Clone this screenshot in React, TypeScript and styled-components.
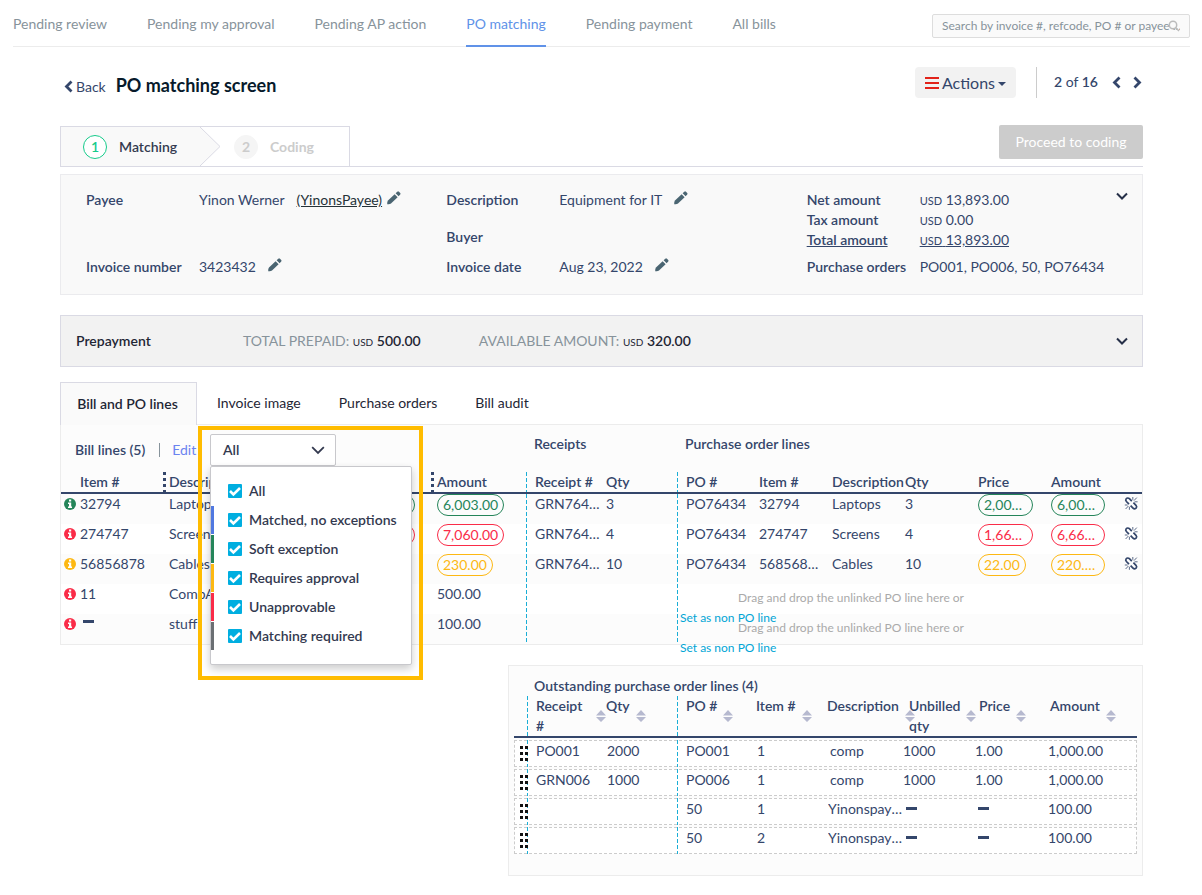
import React from "react";
import styled, { createGlobalStyle, css } from "styled-components";

const ink = "#34466b";

const GlobalStyle = createGlobalStyle`
  * { box-sizing: border-box; }
  body {
    margin: 0;
    background: #fff;
    color: ${ink};
    font: 400 14px/20px Lato, sans-serif;
  }
  button, input { font: inherit; color: inherit; }
  button { cursor: pointer; }
  a { color: inherit; text-decoration: none; }
`;

const TopBar = styled.header`
  display: flex;
  justify-content: space-between;
  height: 47px;
  margin: 0 12px 0 13px;
  border-bottom: 1px solid #ececec;
`;
const Nav = styled.nav`
  display: flex;
  gap: 40px;
`;
const NavLink = styled.a<{ $active?: boolean }>`
  height: 47px;
  padding-top: 14px;
  color: #87939b;
  white-space: nowrap;
  ${(p) => p.$active && css`color: #6092e8; border-bottom: 2px solid #6092e8;`}
`;
const Search = styled.label`
  display: flex;
  align-items: center;
  width: 258px;
  height: 24px;
  margin-top: 14px;
  padding: 0 9px;
  border: 1px solid #ddd;
  border-radius: 2px;
  background: #fafafa;
  color: #bbb;
  svg { flex: none; margin-left: -12px; }
`;
const SearchInput = styled.input`
  flex: 1;
  min-width: 0;
  padding: 0;
  border: 0;
  outline: 0;
  background: none;
  font-size: 12px;
  &::placeholder { color: #87939b; opacity: 1; }
`;

const Page = styled.main`
  margin: 0 59px 0 60px;
`;
const TitleRow = styled.div`
  display: flex;
  align-items: center;
  height: 31px;
  margin-top: 20px;
`;
const Back = styled.a`
  display: flex;
  align-items: center;
  gap: 3px;
  margin: 8px 10px 0 4px;
`;
const Title = styled.h1`
  flex: 1;
  margin: 5px 0 0;
  font-size: 18px;
  line-height: 24px;
  font-weight: 700;
  color: #071a2b;
`;
const ActionsButton = styled.button`
  display: flex;
  align-items: center;
  gap: 3px;
  height: 31px;
  padding: 0 10px;
  border: 0;
  border-radius: 4px;
  background: #f2f2f2;
  font-size: 16px;
`;
const Pager = styled.div`
  display: flex;
  align-items: center;
  height: 31px;
  margin-left: 20px;
  padding: 0 1px 0 17px;
  border-left: 1px solid #ccc;
`;
const PagerText = styled.span`
  margin-right: 14px;
  padding-bottom: 2px;
  b { font-weight: 600; }
`;
const IconButton = styled.button`
  display: flex;
  padding: 0;
  border: 0;
  background: none;
`;
const NextButton = styled(IconButton)`
  margin-left: 12px;
`;

const StepRow = styled.div`
  display: flex;
  justify-content: space-between;
  margin-top: 27px;
  border-bottom: 1px solid #dadae4;
`;
const Steps = styled.ol`
  display: flex;
  align-items: center;
  width: 290px;
  height: 40px;
  margin: 1px 0 0;
  padding: 0;
  list-style: none;
  border: 1px solid #dadae4;
  border-bottom: 0;
`;
const Step = styled.li<{ $active?: boolean }>`
  display: flex;
  align-items: center;
  gap: 12px;
  height: 39px;
  font-weight: ${(p) => (p.$active ? 600 : 700)};
  color: ${(p) => (p.$active ? "#33394f" : "#ccc")};
  ${(p) => p.$active && css`width: 139px; padding-left: 22px; background: #f9f9f9;`}
`;
const StepNumber = styled.span<{ $active?: boolean }>`
  display: grid;
  place-items: center;
  width: 24px;
  height: 24px;
  border-radius: 50%;
  border: 1px solid ${(p) => (p.$active ? "#16cb8b" : "#f5f5f5")};
  background: ${(p) => (p.$active ? "#fff" : "#f5f5f5")};
  color: ${(p) => (p.$active ? "#16cb8b" : "#ccc")};
`;
const StepArrow = styled.svg`
  display: block;
  margin-right: 13px;
`;
const Proceed = styled.button`
  width: 144px;
  height: 34px;
  border: 0;
  border-radius: 2px;
  background: #ccc;
  color: #fff;
`;

const Details = styled.section`
  display: grid;
  grid-template-columns: 1fr 1fr 1fr;
  align-content: start;
  row-gap: 7px;
  min-height: 121px;
  margin-top: 7px;
  padding: 15px 0 17px;
  border: 1px solid #ebebee;
  background: #f9f9f9;
`;
const Field = styled.div<{ $gap?: boolean; $underline?: boolean }>`
  display: flex;
  height: 20px;
  padding-left: 25px;
  white-space: nowrap;
  margin-top: ${(p) => (p.$gap ? 17 : 0)}px;
  text-decoration: ${(p) => (p.$underline ? "underline" : "none")};
`;
const FieldLabel = styled.span`
  flex: none;
  width: 113px;
  font-weight: 600;
`;
const DarkLink = styled.a`
  margin-left: 12px;
  color: #263238;
  text-decoration: underline;
`;
const EditButton = styled(IconButton)<{ $near?: boolean }>`
  margin: 0 0 0 ${(p) => (p.$near ? 4 : 11)}px;
`;
const Toggle = styled(IconButton)<{ $top?: boolean }>`
  margin: 0 14px 0 auto;
  align-self: ${(p) => (p.$top ? "flex-start" : "center")};
  color: #263048;
`;
const Currency = styled.small`
  font-size: 11px;
`;

const Prepayment = styled.section`
  display: flex;
  align-items: center;
  height: 52px;
  margin-top: 20px;
  padding-left: 15px;
  border: 1px solid #dadae4;
  background: #f2f2f2;
  color: #1f2635;
`;
const PrepaymentTitle = styled.h2`
  width: 167px;
  margin: 0;
  font-size: 14px;
  font-weight: 600;
`;
const Prepaid = styled.span`
  margin-right: 58px;
  color: #87939b;
  b { font-weight: 600; }
  b, small { color: #1f2635; }
  small { font-size: 10px; }
`;

const Tabs = styled.div`
  display: flex;
  height: 42px;
  margin-top: 15px;
`;
const Tab = styled.button<{ $active?: boolean }>`
  padding: 0 0 0 20px;
  margin-right: 18px;
  border: 0;
  background: none;
  color: #1f2635;
  ${(p) => p.$active && css`
    width: 137px;
    height: 43px;
    margin-right: 0;
    padding: 0 2px 0 0;
    border: 1px solid #dadae4;
    border-bottom: 0;
    background: #fafafa;
    font-weight: 600;
  `}
`;

const LinesPanel = styled.section`
  border: 1px solid #ececec;
  background: #fcfcfc;
`;
const LinesHeader = styled.div`
  display: flex;
  height: 47px;
  padding-top: 9px;
  font-weight: 600;
`;
const BillTitle = styled.div`
  flex: 0 0 149px;
  display: flex;
  align-items: center;
  height: 31px;
  padding-left: 14px;
`;
const Divider = styled.span`
  width: 1px;
  height: 14px;
  margin: 0 12px 0 14px;
  background: #87939b;
`;
const EditLink = styled.a`
  color: #6b83f0;
  font-weight: 400;
`;
const GroupTitle = styled.h3<{ $width?: number }>`
  margin: 0;
  width: ${(p) => (p.$width ? `${p.$width}px` : "auto")};
  font-size: 14px;
  font-weight: 600;
`;
const Filter = styled.div`
  position: relative;
  width: 324px;
`;
const FilterButton = styled.button`
  display: flex;
  align-items: center;
  justify-content: space-between;
  width: 126px;
  height: 32px;
  padding: 0 10px 0 12px;
  border: 1px solid #c8c8cc;
  border-radius: 2px;
  background: #fff;
  font-weight: 600;
  color: #33394f;
`;
const Highlight = styled.div`
  position: absolute;
  z-index: 2;
  top: -8px;
  left: -12px;
  width: 225px;
  height: 254px;
  border: 4px solid #ffbc00;
  pointer-events: none;
`;
const Menu = styled.div`
  position: absolute;
  z-index: 3;
  top: 32px;
  left: 0;
  width: 202px;
  height: 199px;
  padding-top: 10px;
  border: 1px solid #c8c8cc;
  border-radius: 2px;
  background: #fff;
  box-shadow: 0 4px 8px rgba(0, 0, 0, 0.2);
`;
const Option = styled.label<{ $bar?: string }>`
  display: flex;
  align-items: center;
  gap: 7px;
  height: 28px;
  margin-bottom: 1px;
  padding-left: 14px;
  border-left: 3px solid ${(p) => p.$bar || "transparent"};
  color: #33394f;
  white-space: nowrap;
`;
const CheckWrap = styled.span`
  position: relative;
  display: flex;
  svg { position: absolute; inset: 0; pointer-events: none; }
`;
const CheckInput = styled.input`
  appearance: none;
  width: 14px;
  height: 14px;
  margin: 0;
  border-radius: 1px;
  background: #00aee0;
`;

const LinesTable = styled.table`
  width: 100%;
  table-layout: fixed;
  border-collapse: separate;
  border-spacing: 0;
  th, td { padding: 0; text-align: left; vertical-align: top; white-space: nowrap; }
  th { height: 22px; font-weight: 600; border-bottom: 2px solid ${ink}; }
  td { height: 30px; }
  tbody tr:nth-child(even) { background: #fff; }
`;
const dash = css`
  background-image: repeating-linear-gradient(to bottom, #1aaed6 0 4px, transparent 4px 6px);
  background-size: 1px 100%;
  background-repeat: no-repeat;
`;
const Cell = styled.td<{ $pad?: number; $rule?: boolean }>`
  && { padding-left: ${(p) => p.$pad || 0}px; }
  ${(p) => p.$rule && dash}
`;
const Head = styled.th<{ $pad?: number; $rule?: boolean; $grip?: boolean }>`
  && { padding-left: ${(p) => p.$pad || 0}px; }
  ${(p) => p.$rule && dash}
  ${(p) => p.$grip && css`
    background: repeating-linear-gradient(to bottom, ${ink} 0 3px, transparent 3px 6px) 0 0 / 3px 100% no-repeat;
  `}
`;
const Clip = styled.div<{ $end: number }>`
  margin-right: ${(p) => p.$end}px;
  overflow: hidden;
  text-overflow: ellipsis;
`;
const ItemCell = styled.div`
  display: flex;
  align-items: center;
  gap: 4px;
  height: 20px;
`;
const Pill = styled.span<{ $tone: string; $max?: number }>`
  display: block;
  width: fit-content;
  max-width: ${(p) => (p.$max ? `${p.$max}px` : "none")};
  height: 22px;
  padding: 0 5px;
  border: 1px solid ${(p) => p.$tone};
  border-radius: 11px;
  color: ${(p) => p.$tone};
  overflow: hidden;
  text-overflow: ellipsis;
`;
const UnlinkButton = styled(IconButton)`
  margin-top: 2px;
`;
const DropZone = styled.div`
  height: 30px;
  padding-left: 3px;
  font-size: 12px;
  color: #aaa;
`;
const DropHint = styled.p`
  height: 24px;
  margin: 0;
  padding: 4px 0 0 58px;
`;
const NonPoLink = styled.a`
  position: relative;
  z-index: 1;
  display: block;
  color: #00a5d6;
`;

const Outstanding = styled.section`
  margin: 20px 0 20px 448px;
  padding: 10px 5px 19px;
  border: 1px solid #ececec;
  background: #fcfcfc;
`;
const OutstandingTitle = styled.h3`
  margin: 0 0 0 20px;
  font-size: 14px;
  font-weight: 600;
`;
const OutTable = styled.table`
  width: 100%;
  table-layout: fixed;
  border-collapse: separate;
  border-spacing: 0 2px;
  margin-top: -2px;
  th, td { padding: 0; text-align: left; vertical-align: top; }
  th { font-weight: 600; border-bottom: 2px solid ${ink}; }
  td { height: 27px; padding-top: 1px; white-space: nowrap; }
  tbody tr { background: #fff; outline: 1px dashed #ccc; outline-offset: -1px; }
`;
const SortHead = styled.div`
  display: flex;
  gap: 6px;
  height: 40px;
  svg { flex: none; align-self: center; }
`;
const Grip = styled.svg`
  display: block;
  margin: 5px 0 0 6px;
`;

const tones = { green: "#25855a", red: "#fa2c48", amber: "#fdb813" };

const Pencil = () => (
  <svg width="16" height="16" viewBox="0 0 16 16" fill="#4a6572" aria-hidden="true">
    <path d="M1.200 14.200q-.2-2.600.8-3.600L8.600 4.200l3 3-6.600 6.400q-1.200 1-3.800.6z" />
    <path d="M9.600 3.300l1.700-1.600q.8-.7 1.600 0l1.300 1.300q.7.8 0 1.600l-1.600 1.700z" />
  </svg>
);
const ChevronDown = ({ size = 12, stroke = 2 }: { size?: number; stroke?: number }) => (
  <svg width={size} height={size} viewBox="0 0 12 12" fill="none" stroke="currentColor" strokeWidth={stroke} aria-hidden="true">
    <path d="M1 3.500l5 5 5-5" />
  </svg>
);
const Chevron = ({ right }: { right?: boolean }) => (
  <svg width="9" height="13" viewBox="0 0 9 13" fill="none" stroke="currentColor" strokeWidth="2.800" aria-hidden="true">
    <path d={right ? "M1.500 1.500l5 5-5 5" : "M7.500 1.500l-5 5 5 5"} />
  </svg>
);
const Info = ({ color }: { color: string }) => (
  <svg width="12" height="12" viewBox="0 0 12 12" aria-hidden="true">
    <circle cx="6" cy="6" r="6" fill={color} />
    <path d="M5 1.500h2.200v2H5zM4 4.500h3.200v4H8V10H4V8.500h1V6H4z" fill="#fff" />
  </svg>
);
const Unlink = () => (
  <svg width="15" height="15" viewBox="0 0 15 15" fill="none" stroke={ink} aria-hidden="true">
    <path strokeWidth="1.700" d="M7.800 5.200L5.400 2.700C4.400 1.700 2.900 1.800 2.200 2.700s-.5 2 .2 2.800L5 8.200" />
    <path strokeWidth="1.700" d="M6.600 9.600L9 12.100c1 1 2.500.9 3.200 0s.5-2-.2-2.800L9.400 6.600" />
    <path strokeWidth=".8" d="M8.800 3.800V1M10 4.600l2.800-3M10.600 5.800h3M5.400 10.800v3M4.400 10L1.600 13M3.600 9H.8" />
  </svg>
);
const Dash = () => (
  <svg width="17" height="20" viewBox="0 0 17 20" aria-label="none">
    <rect x="3" y="8" width="11" height="3" fill={ink} />
  </svg>
);
const CellDash = styled.span`
  display: block;
  padding-top: 1px;
`;
const Sort = () => (
  <svg width="10" height="12" viewBox="0 0 10 12" fill="#b6b9cf" aria-hidden="true">
    <path d="M0 5.500L5 0l5 5.500zM0 7h10l-5 5z" />
  </svg>
);

const billRows = [
  { tone: "green", item: "32794", desc: "Laptops", qty: "3", price: "2,001.00", amount: "6,003.00", receipt: "GRN76434", po: "PO76434", poItem: "32794", poPrice: "2,000.00", poAmount: "6,000.00" },
  { tone: "red", item: "274747", desc: "Screens", qty: "4", price: "1,765.00", amount: "7,060.00", receipt: "GRN76434", po: "PO76434", poItem: "274747", poPrice: "1,665.00", poAmount: "6,660.00" },
  { tone: "amber", item: "56856878", desc: "Cables", qty: "10", price: "23.00", amount: "230.00", receipt: "GRN76434", po: "PO76434", poItem: "56856878", poPrice: "22.00", poAmount: "220.00" },
  { tone: "red", item: "11", desc: "CompAcc", amount: "500.00" },
  { tone: "red", item: "", desc: "stuff", amount: "100.00" },
] as const;

const options: [string, string?][] = [
  ["All"],
  ["Matched, no exceptions", "#5078e0"],
  ["Soft exception", "#25855a"],
  ["Requires approval", "#fdb913"],
  ["Unapprovable", "#fa2c48"],
  ["Matching required", "#6b6f73"],
];

const outRows = [
  ["PO001", "2000", "PO001", "1", "comp", "1000", "1.00", "1,000.00"],
  ["GRN006", "1000", "PO006", "1", "comp", "1000", "1.00", "1,000.00"],
  ["", "", "50", "1", "Yinonspayee", "", "", "100.00"],
  ["", "", "50", "2", "Yinonspayee", "", "", "100.00"],
];
const outHeads: [string, number, boolean?][] = [
  ["Receipt #", 9, true], ["Qty", 0], ["PO #", 9, true], ["Item #", 0],
  ["Description", 0], ["Unbilled qty", 6], ["Price", 4], ["Amount", 2],
];

const lineCols = [102, 93, 89, 86, 95, 80, 71, 82, 73, 73, 73, 73, 73, 18];
const outCols = [13, 79, 71, 79, 71, 76, 72, 73, 89];

const Usd = ({ children }: { children: React.ReactNode }) => (
  <span><Currency>USD</Currency> {children}</span>
);

function FilterMenu() {
  return (
    <Filter>
      <Highlight />
      <FilterButton aria-haspopup="listbox" aria-expanded="true">
        All <ChevronDown size={14} stroke={1.5} />
      </FilterButton>
      <Menu>
        {options.map(([name, bar]) => (
          <Option key={name} $bar={bar}>
            <CheckWrap>
              <CheckInput type="checkbox" defaultChecked />
              <svg width="14" height="14" viewBox="0 0 14 14" fill="none" stroke="#fff" strokeWidth="2.600">
                <path d="M2 7l3.400 3.400L12 4" />
              </svg>
            </CheckWrap>
            {name}
          </Option>
        ))}
      </Menu>
    </Filter>
  );
}

function BillLines() {
  return (
    <LinesTable>
      <colgroup>{lineCols.map((w, i) => <col key={i} style={{ width: w }} />)}</colgroup>
      <thead>
        <tr>
          <Head $pad={19}>Item #</Head>
          <Head $pad={6} $grip>Description</Head>
          <Head $pad={6} $grip>Qty</Head>
          <Head $pad={3}>Price</Head>
          <Head $pad={6} $grip>Amount</Head>
          <Head $pad={9} $rule>Receipt #</Head>
          <Head>Qty</Head>
          <Head $pad={9} $rule>PO #</Head>
          <Head>Item #</Head>
          <Head>Description</Head>
          <Head>Qty</Head>
          <Head>Price</Head>
          <Head>Amount</Head>
          <Head />
        </tr>
      </thead>
      <tbody>
        {billRows.map((r) => {
          const tone = tones[r.tone];
          return (
            <tr key={r.item}>
              <Cell $pad={3}>
                <ItemCell><Info color={tone} />{r.item || <CellDash as="b"><Dash /></CellDash>}</ItemCell>
              </Cell>
              <Cell $pad={6}>{r.desc}</Cell>
              <Cell $pad={6}>{"qty" in r && r.qty}</Cell>
              <Cell $pad={3}>{"price" in r && <Pill $tone={tone}>{r.price}</Pill>}</Cell>
              <Cell $pad={6}>{"po" in r ? <Pill $tone={tone}>{r.amount}</Pill> : r.amount}</Cell>
              <Cell $pad={9} $rule>{"po" in r && <Clip $end={4}>{r.receipt}</Clip>}</Cell>
              <Cell>{"po" in r && r.qty}</Cell>
              {"po" in r ? (
                <>
                  <Cell $pad={9} $rule>{r.po}</Cell>
                  <Cell><Clip $end={12}>{r.poItem}</Clip></Cell>
                  <Cell>{r.desc}</Cell>
                  <Cell>{r.qty}</Cell>
                  <Cell><Pill $tone={tone} $max={55}>{r.poPrice}</Pill></Cell>
                  <Cell><Pill $tone={tone} $max={54}>{r.poAmount}</Pill></Cell>
                  <Cell><UnlinkButton aria-label="Unlink line"><Unlink /></UnlinkButton></Cell>
                </>
              ) : (
                <Cell colSpan={7} $rule>
                  <DropZone>
                    <DropHint>Drag and drop the unlinked PO line here or</DropHint>
                    <NonPoLink href="#">Set as non PO line</NonPoLink>
                  </DropZone>
                </Cell>
              )}
            </tr>
          );
        })}
      </tbody>
    </LinesTable>
  );
}

function OutstandingLines() {
  const pads = [9, 1, 9, 1, 1, 0, 0, 0];
  return (
    <Outstanding>
      <OutstandingTitle>Outstanding purchase order lines (4)</OutstandingTitle>
      <OutTable>
        <colgroup>{outCols.map((w, i) => <col key={i} style={{ width: w }} />)}</colgroup>
        <thead>
          <tr>
            <Head />
            {outHeads.map(([name, pad, rule]) => (
              <Head key={name} $pad={pad} $rule={rule}>
                <SortHead><span>{name}</span><Sort /></SortHead>
              </Head>
            ))}
          </tr>
        </thead>
        <tbody>
          {outRows.map((row, n) => (
            <tr key={n}>
              <Cell>
                <Grip width="8" height="15" viewBox="0 0 8 15" fill="#111">
                  <path d="M0 0h3v3H0zM5 0h3v3H5zM0 6h3v3H0zM5 6h3v3H5zM0 12h3v3H0zM5 12h3v3H5z" />
                </Grip>
              </Cell>
              {row.map((v, i) => (
                <Cell key={i} $pad={v === "comp" ? 3 : pads[i]} $rule={i === 0 || i === 2}>
                  {i === 4 ? <Clip $end={0}>{v}</Clip> : v || (i > 1 && <Dash />)}
                </Cell>
              ))}
            </tr>
          ))}
        </tbody>
      </OutTable>
    </Outstanding>
  );
}

export default function App() {
  return (
    <>
      <GlobalStyle />
      <TopBar>
        <Nav>
          {["Pending review", "Pending my approval", "Pending AP action", "PO matching", "Pending payment", "All bills"].map((t) => (
            <NavLink key={t} href="#" $active={t === "PO matching"}>{t}</NavLink>
          ))}
        </Nav>
        <Search>
          <SearchInput aria-label="Search bills" placeholder="Search by invoice #, refcode, PO # or payee ..." />
          <svg width="12" height="12" viewBox="0 0 12 12" fill="none" stroke="currentColor" strokeWidth="1.500">
            <circle cx="5" cy="5" r="3.700" /><path d="M7.800 7.800L11 11" />
          </svg>
        </Search>
      </TopBar>
      <Page>
        <TitleRow>
          <Back href="#"><Chevron />Back</Back>
          <Title>PO matching screen</Title>
          <ActionsButton>
            <svg width="14" height="14" viewBox="0 0 14 14" fill="#e2231a" aria-hidden="true">
              <path d="M0 1h14v2H0zM0 6h14v2H0zM0 11h14v2H0z" />
            </svg>
            Actions
            <svg width="8" height="8" viewBox="0 0 8 8" fill="currentColor" aria-hidden="true">
              <path d="M0 3h8L4 7z" />
            </svg>
          </ActionsButton>
          <Pager>
            <PagerText><b>2</b> of <b>16</b></PagerText>
            <IconButton aria-label="Previous bill"><Chevron /></IconButton>
            <NextButton aria-label="Next bill"><Chevron right /></NextButton>
          </Pager>
        </TitleRow>
        <StepRow>
          <Steps>
            <Step $active><StepNumber $active>1</StepNumber>Matching</Step>
            <StepArrow width="21" height="39" viewBox="0 0 21 39" fill="#f9f9f9" stroke="#dadae4">
              <path d="M0 0l20 19.500L0 39" />
            </StepArrow>
            <Step><StepNumber>2</StepNumber>Coding</Step>
          </Steps>
          <Proceed>Proceed to coding</Proceed>
        </StepRow>
        <Details>
          <div>
            <Field>
              <FieldLabel>Payee</FieldLabel>Yinon Werner
              <DarkLink href="#">(YinonsPayee)</DarkLink>
              <EditButton $near aria-label="Edit payee"><Pencil /></EditButton>
            </Field>
          </div>
          <div>
            <Field><FieldLabel>Description</FieldLabel>Equipment for IT<EditButton aria-label="Edit description"><Pencil /></EditButton></Field>
            <Field $gap><FieldLabel>Buyer</FieldLabel></Field>
          </div>
          <div>
            <Field>
              <FieldLabel>Net amount</FieldLabel><Usd>13,893.00</Usd>
              <Toggle $top aria-label="Collapse details"><ChevronDown /></Toggle>
            </Field>
            <Field><FieldLabel>Tax amount</FieldLabel><Usd>0.00</Usd></Field>
            <Field $underline><FieldLabel>Total amount</FieldLabel><Usd>13,893.00</Usd></Field>
          </div>
          <Field><FieldLabel>Invoice number</FieldLabel>3423432<EditButton aria-label="Edit invoice number"><Pencil /></EditButton></Field>
          <Field><FieldLabel>Invoice date</FieldLabel>Aug 23, 2022<EditButton aria-label="Edit invoice date"><Pencil /></EditButton></Field>
          <Field><FieldLabel>Purchase orders</FieldLabel>PO001, PO006, 50, PO76434</Field>
        </Details>
        <Prepayment>
          <PrepaymentTitle>Prepayment</PrepaymentTitle>
          <Prepaid>TOTAL PREPAID: <small>USD</small> <b>500.00</b></Prepaid>
          <Prepaid>AVAILABLE AMOUNT: <small>USD</small> <b>320.00</b></Prepaid>
          <Toggle aria-label="Expand prepayment"><ChevronDown /></Toggle>
        </Prepayment>
        <Tabs>
          <Tab $active>Bill and PO lines</Tab>
          <Tab>Invoice image</Tab>
          <Tab>Purchase orders</Tab>
          <Tab>Bill audit</Tab>
        </Tabs>
        <LinesPanel>
          <LinesHeader>
            <BillTitle>Bill lines (5)<Divider /><EditLink href="#">Edit</EditLink></BillTitle>
            <FilterMenu />
            <GroupTitle $width={151}>Receipts</GroupTitle>
            <GroupTitle>Purchase order lines</GroupTitle>
          </LinesHeader>
          <BillLines />
        </LinesPanel>
        <OutstandingLines />
      </Page>
    </>
  );
}
